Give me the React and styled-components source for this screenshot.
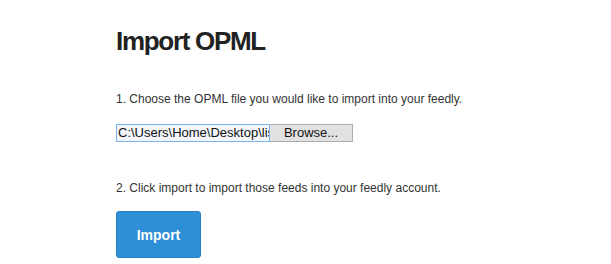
import styled, { createGlobalStyle } from 'styled-components';

const GlobalStyle = createGlobalStyle`
  html, body {
    margin: 0;
    padding: 0;
    background: #ffffff;
  }
  body {
    font-family: "Liberation Sans", Arial, sans-serif;
    color: #333333;
  }
`;

const Page = styled.main`
  display: flex;
  flex-direction: column;
  align-items: flex-start;
  padding: 28px 0 0 116px;
`;

const Title = styled.h1`
  margin: 0;
  font-size: 26px;
  line-height: 26px;
  font-weight: 700;
  letter-spacing: -1.3px;
  color: #222222;
`;

const Step = styled.p`
  margin: ${({ $top }) => $top}px 0 0;
  font-size: 12px;
  line-height: 16px;
  color: #333333;
`;

const FilePicker = styled.div`
  display: flex;
  height: 18px;
  margin-top: 17px;
`;

const PathField = styled.div`
  box-sizing: border-box;
  width: 154px;
  height: 18px;
  padding: 0 1px;
  border: 1px solid #7eb4ea;
  background: #f2f6fa;
  font-size: 13px;
  line-height: 16px;
  color: #111111;
  white-space: nowrap;
  overflow: hidden;
  text-overflow: clip;
`;

const BrowseButton = styled.button`
  box-sizing: border-box;
  width: 83px;
  height: 18px;
  padding: 0;
  border: 1px solid #adadad;
  border-left: none;
  background: #e1e1e1;
  font-family: "Liberation Sans", Arial, sans-serif;
  font-size: 13px;
  line-height: 16px;
  color: #111111;
  cursor: pointer;
`;

const ImportButton = styled.button`
  box-sizing: border-box;
  width: 85px;
  height: 47px;
  margin-top: 15px;
  border: 1px solid #2a80c4;
  border-radius: 3px;
  background: #2e8ed6;
  font-family: "Liberation Sans", Arial, sans-serif;
  font-size: 14px;
  font-weight: 700;
  color: #ffffff;
  cursor: pointer;
`;

export default function App() {
  return (
    <>
      <GlobalStyle />
      <Page>
        <Title>Import OPML</Title>
        <Step $top={37}>1. Choose the OPML file you would like to import into your feedly.</Step>
        <FilePicker>
          <PathField>C:\Users\Home\Desktop\lists.opml</PathField>
          <BrowseButton type="button">Browse...</BrowseButton>
        </FilePicker>
        <Step $top={38}>2. Click import to import those feeds into your feedly account.</Step>
        <ImportButton type="button">Import</ImportButton>
      </Page>
    </>
  );
}
